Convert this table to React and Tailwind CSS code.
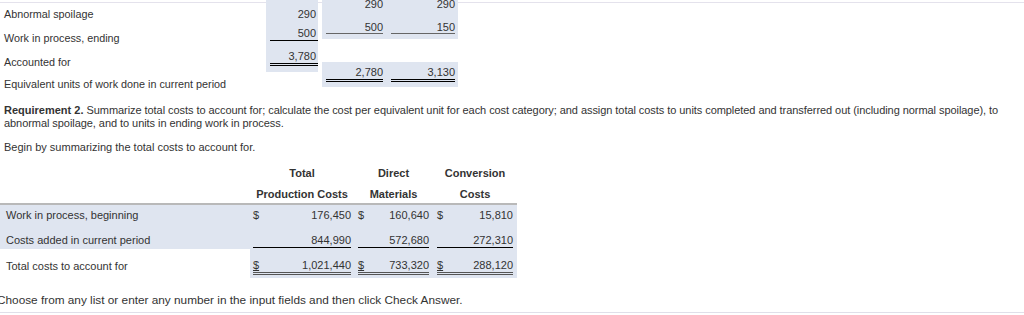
import React from 'react';

// Units summary (top, scrolled partly out of view)
function UnitsSummary() {
  return (
    <div className="-mt-[3px] flex h-[92px]">
      <div className="w-[266px] pl-[4px] pt-[2px] leading-[24px] text-[10.8px]">
        <div>Abnormal spoilage</div>
        <div>Work in process, ending</div>
        <div>Accounted for</div>
        <div className="leading-[20px]">Equivalent units of work done in current period</div>
      </div>

      <div className="w-[52px] h-[72px] bg-[#dfe5f0] pl-[4px] pt-[2px] text-right">
        <div className="leading-[24px] pr-[2px]">290</div>
        <div className="leading-[14px] pr-[2px] border-b border-black">500</div>
        <div className="mt-[8px] leading-[14px] pr-[2px] border-b-[3px] border-double border-black">3,780</div>
      </div>

      <div className="ml-[4px] w-[136px] flex flex-col">
        <div className="h-[39px] bg-[#dfe5f0] flex overflow-hidden text-right">
          <div className="w-[66px] pl-[4px] pr-[5px]">
            <div className="-mt-[2px] leading-[12px]">290</div>
            <div className="mt-[11px] leading-[12px] border-b border-[#666]">500</div>
          </div>
          <div className="w-[70px] pl-[3px] pr-[3px]">
            <div className="-mt-[2px] leading-[12px]">290</div>
            <div className="mt-[11px] leading-[12px] border-b border-[#666]">150</div>
          </div>
        </div>
        <div className="h-[23px]" />
        <div className="h-[25px] bg-[#dfe5f0] flex pt-[3px] text-right">
          <div className="w-[66px] pl-[4px] pr-[5px]">
            <div className="leading-[14px] border-b-[3px] border-double border-black">2,780</div>
          </div>
          <div className="w-[70px] pl-[3px] pr-[3px]">
            <div className="leading-[14px] border-b-[3px] border-double border-black">3,130</div>
          </div>
        </div>
      </div>
    </div>
  );
}

const costRows = [
  { label: 'Work in process, beginning', values: ['176,450', '160,640', '15,810'] },
  { label: 'Costs added in current period', values: ['844,990', '572,680', '272,310'] },
];

const totals = ['1,021,440', '733,320', '288,120'];
const cellPads = ['pl-[3px] pr-[4px]', 'pl-[3px] pr-[4px]', 'pl-[4px] pr-[4px]'];

function CostsTable() {
  return (
    <div className="mt-[11px] w-[517px]">
      <div className="grid grid-cols-[250px_105px_78px_84px] font-bold text-center border-b-2 border-[#b9b9b9] pb-[2px]">
        <div />
        <div className={cellPads[0]}>
          <div className="mt-[1px] leading-[14px]">Total</div>
          <div className="mt-[7px] leading-[14px]">Production Costs</div>
        </div>
        <div className={cellPads[1]}>
          <div className="mt-[1px] leading-[14px]">Direct</div>
          <div className="mt-[7px] leading-[14px]">Materials</div>
        </div>
        <div className={cellPads[2]}>
          <div className="mt-[1px] leading-[14px]">Conversion</div>
          <div className="mt-[7px] leading-[14px]">Costs</div>
        </div>
      </div>

      {/* first row */}
      <div className="grid grid-cols-[250px_105px_78px_84px] bg-[#dfe5f0] h-[22px] leading-[21px]">
        <div className="pl-[6px]">{costRows[0].label}</div>
        {costRows[0].values.map((v, i) => (
          <div key={i} className={`${cellPads[i]} flex justify-between`}>
            <span>$</span>
            <span>{v}</span>
          </div>
        ))}
      </div>

      {/* second row */}
      <div className="grid grid-cols-[250px_105px_78px_84px] bg-[#dfe5f0] h-[22px] pt-[6px]">
        <div className="pl-[6px] leading-[14px]">{costRows[1].label}</div>
        {costRows[1].values.map((v, i) => (
          <div key={i} className={cellPads[i]}>
            <div className="leading-[14px] text-right border-b border-black">{v}</div>
          </div>
        ))}
      </div>

      {/* totals */}
      <div className="grid grid-cols-[250px_105px_78px_84px] h-[29px]">
        <div className="pl-[6px] pt-[10px] leading-[14px]">Total costs to account for</div>
        {totals.map((v, i) => (
          <div key={i} className={`${cellPads[i]} bg-[#dfe5f0] pt-[9px]`}>
            <div className="leading-[14px] flex justify-between border-b-[3px] border-double border-[#555]">
              <span className="underline">$</span>
              <span>{v}</span>
            </div>
          </div>
        ))}
      </div>
    </div>
  );
}

export default function App() {
  return (
    <div className="w-[1024px] h-[315px] overflow-hidden bg-white text-[#333] text-[11px] font-['Liberation_Sans',Arial,sans-serif]">
      <div className="mt-[2px] border-t border-[#e4e2ec]">
        <UnitsSummary />

        <div className="mt-[12px] pl-[4px] leading-[13px] whitespace-nowrap tracking-[-0.06px]">
          <span className="font-bold tracking-normal">Requirement 2.</span> Summarize total costs to account for; calculate the cost per
          equivalent unit for each cost category; and assign total costs to units completed and transferred out
          (including normal spoilage), to
          <br />
          abnormal spoilage, and to units in ending work in process.
        </div>
        <div className="mt-[11px] pl-[4px] leading-[13px]">Begin by summarizing the total costs to account for.</div>

        <CostsTable />

        <div className="mt-[15px] -ml-[3px] leading-[15px] text-[11.8px]">
          Choose from any list or enter any number in the input fields and then click Check Answer.
        </div>
        <div className="mt-[4px] border-t border-[#e0dfe9]" />
      </div>
    </div>
  );
}
